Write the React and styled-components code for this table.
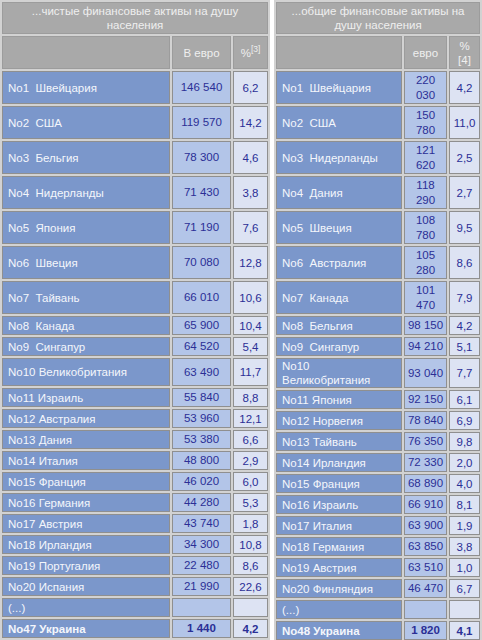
import styled, { createGlobalStyle, css } from "styled-components";

const GlobalStyle = createGlobalStyle`
  html, body {
    margin: 0;
    padding: 0;
    background: #ffffff;
  }
  body {
    font-family: "Liberation Sans", Arial, sans-serif;
  }
`;

const Page = styled.div`
  display: flex;
  width: 482px;
  height: 640px;
  gap: 4px;
  background: #ffffff;
`;

const Table = styled.table`
  table-layout: fixed;
  border-collapse: separate;
  border-spacing: 2px;
  background: #d2d2d2;
  font-size: 11.5px;
  line-height: 14px;
`;

const Row = styled.tr`
  height: ${(p) => p.$h}px;
`;

const kinds = {
  head: css`
    background: #a9a9a9;
    color: #efefef;
    text-align: center;
    border-color: #9c9c9c;
  `,
  name: css`
    background: #7b97cb;
    color: #f4f6fb;
    text-align: left;
    padding-left: 5px;
  `,
  euro: css`
    background: #b3c5e8;
    color: #2b2f96;
    text-align: center;
    padding: 0 1px;
    line-height: 15px;
  `,
  pct: css`
    background: #dde3f3;
    color: #2b2f96;
    text-align: center;
    padding: 0 1px;
  `,
};

const Cell = styled.td`
  border: 1px solid #8f8f8f;
  padding: 0 3px;
  vertical-align: middle;
  overflow: hidden;
  ${(p) => kinds[p.$kind]}
  ${(p) => p.$bold && "font-weight: bold;"}
`;

const Sup = styled.sup`
  font-size: 8.5px;
  vertical-align: 5px;
  line-height: 0;
`;

const left = [
  ["No1\u00a0\u00a0Швейцария", "146 540", "6,2"],
  ["No2\u00a0\u00a0США", "119 570", "14,2"],
  ["No3\u00a0\u00a0Бельгия", "78 300", "4,6"],
  ["No4\u00a0\u00a0Нидерланды", "71 430", "3,8"],
  ["No5\u00a0\u00a0Япония", "71 190", "7,6"],
  ["No6\u00a0\u00a0Швеция", "70 080", "12,8"],
  ["No7\u00a0\u00a0Тайвань", "66 010", "10,6"],
  ["No8\u00a0\u00a0Канада", "65 900", "10,4"],
  ["No9\u00a0\u00a0Сингапур", "64 520", "5,4"],
  ["No10 Великобритания", "63 490", "11,7"],
  ["No11 Израиль", "55 840", "8,8"],
  ["No12 Австралия", "53 960", "12,1"],
  ["No13 Дания", "53 380", "6,6"],
  ["No14 Италия", "48 800", "2,9"],
  ["No15 Франция", "46 020", "6,0"],
  ["No16 Германия", "44 280", "5,3"],
  ["No17 Австрия", "43 740", "1,8"],
  ["No18 Ирландия", "34 300", "10,8"],
  ["No19 Португалия", "22 480", "8,6"],
  ["No20 Испания", "21 990", "22,6"],
  ["(...)", "", ""],
  ["No47 Украина", "1 440", "4,2"],
];

const right = [
  ["No1\u00a0\u00a0Швейцария", "220 030", "4,2"],
  ["No2\u00a0\u00a0США", "150 780", "11,0"],
  ["No3\u00a0\u00a0Нидерланды", "121 620", "2,5"],
  ["No4\u00a0\u00a0Дания", "118 290", "2,7"],
  ["No5\u00a0\u00a0Швеция", "108 780", "9,5"],
  ["No6\u00a0\u00a0Австралия", "105 280", "8,6"],
  ["No7\u00a0\u00a0Канада", "101 470", "7,9"],
  ["No8\u00a0\u00a0Бельгия", "98 150", "4,2"],
  ["No9\u00a0\u00a0Сингапур", "94 210", "5,1"],
  ["No10 Великобритания", "93 040", "7,7"],
  ["No11 Япония", "92 150", "6,1"],
  ["No12 Норвегия", "78 840", "6,9"],
  ["No13 Тайвань", "76 350", "9,8"],
  ["No14 Ирландия", "72 330", "2,0"],
  ["No15 Франция", "68 890", "4,0"],
  ["No16 Израиль", "66 910", "8,1"],
  ["No17 Италия", "63 900", "1,9"],
  ["No18 Германия", "63 850", "3,8"],
  ["No19 Австрия", "63 510", "1,0"],
  ["No20 Финляндия", "46 470", "6,7"],
  ["(...)", "", ""],
  ["No48 Украина", "1 820", "4,1"],
];

// row heights (without spacing)
const heights = [33, 33, 33, 33, 33, 33, 33, 19, 19, 28, 19, 19, 19, 19, 19, 19, 19, 19, 19, 19, 19, 19];

const Ranking = ({ title, euroLabel, pctLabel, rows, cols, width }) => (
  <Table style={{ width }}>
    <colgroup>
      {cols.map((w, i) => (
        <col key={i} style={{ width: w }} />
      ))}
    </colgroup>
    <tbody>
      <Row $h={32}>
        <Cell $kind="head" colSpan={3}>
          {title}
        </Cell>
      </Row>
      <Row $h={33}>
        <Cell $kind="head" />
        <Cell $kind="head">{euroLabel}</Cell>
        <Cell $kind="head">{pctLabel}</Cell>
      </Row>
      {rows.map(([name, euro, pct], i) => {
        const bold = i === rows.length - 1;
        return (
          <Row key={i} $h={heights[i]}>
            <Cell $kind="name" $bold={bold}>
              {name}
            </Cell>
            <Cell $kind="euro" $bold={bold}>
              {euro}
            </Cell>
            <Cell $kind="pct" $bold={bold}>
              {pct}
            </Cell>
          </Row>
        );
      })}
    </tbody>
  </Table>
);

export default function App() {
  return (
    <>
      <GlobalStyle />
      <Page>
        <Ranking
          title="...чистые финансовые активы на душу населения"
          euroLabel="В евро"
          pctLabel={
            <>
              %<Sup>[3]</Sup>
            </>
          }
          rows={left}
          cols={[168, 59, 35]}
          width={270}
        />
        <Ranking
          title="...общие финансовые активы на душу населения"
          euroLabel="евро"
          pctLabel={
            <>
              %<br />
              [4]
            </>
          }
          rows={right}
          cols={[126, 43, 31]}
          width={208}
        />
      </Page>
    </>
  );
}
